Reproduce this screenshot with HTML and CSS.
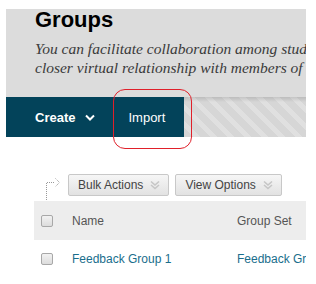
FILE: index.html
```html
<!DOCTYPE html>
<html lang="en">
<head>
    <meta charset="UTF-8">
    <title>Groups</title>
    <link rel="stylesheet" href="styles.css">
</head>
<body>
    <div class="page">
        <div class="page-header">
            <h1>Groups</h1>
            <p class="intro">You can facilitate collaboration among students by creating groups that give them a<br>closer virtual relationship with members of their group.</p>
        </div>

        <div class="action-bar">
            <ul class="actions">
                <li class="action">Create
                    <svg class="chevron" width="10" height="7" viewBox="0 0 10 7"><path d="M1 1.5 L5 5.5 L9 1.5" fill="none" stroke="#fff" stroke-width="2"/></svg>
                </li>
                <li class="action action-import">Import</li>
            </ul>
            <div class="stripes"></div>
        </div>

        <div class="list-area">
            <div class="toolbar">
                <svg class="connector" width="16" height="22" viewBox="0 0 16 22">
                    <path d="M1.5 22 V4.5 H10" fill="none" stroke="#999" stroke-dasharray="1 1"/>
                    <path d="M10.5 0.5 L14.5 4.5 L10.5 8.5" fill="none" stroke="#999" stroke-dasharray="1 1"/>
                </svg>
                <button class="tool-btn">Bulk Actions <span class="dbl"><svg width="10" height="10" viewBox="0 0 10 10"><path d="M1 1.5 L5 5 L9 1.5 M1 5 L5 8.5 L9 5" fill="none" stroke="#c6c6c6" stroke-width="1.6"/></svg></span></button>
                <button class="tool-btn">View Options <span class="dbl"><svg width="10" height="10" viewBox="0 0 10 10"><path d="M1 1.5 L5 5 L9 1.5 M1 5 L5 8.5 L9 5" fill="none" stroke="#c6c6c6" stroke-width="1.6"/></svg></span></button>
            </div>

            <table class="groups">
                <thead>
                    <tr>
                        <th class="col-check"><span class="checkbox"></span></th>
                        <th class="col-name">Name</th>
                        <th class="col-set">Group Set</th>
                    </tr>
                </thead>
                <tbody>
                    <tr>
                        <td class="col-check"><span class="checkbox"></span></td>
                        <td class="col-name"><a href="#">Feedback Group 1</a></td>
                        <td class="col-set"><a href="#">Feedback Group Set</a></td>
                    </tr>
                </tbody>
            </table>
        </div>
    </div>
    <div class="highlight"></div>
</body>
</html>
```

FILE: styles.css
```css
* {
    margin: 0;
    padding: 0;
    box-sizing: border-box;
}

body {
    font-family: "Liberation Sans", Arial, sans-serif;
    background: #fff;
    padding: 9px 10px 0 6px;
    overflow: hidden;
    position: relative;
}

.page {
    width: 300px;
    overflow: hidden;
}

.page-header {
    background: #dcdcdc;
    padding-left: 29px;
    height: 88px;
}

h1 {
    font-size: 22px;
    font-weight: bold;
    color: #000;
    line-height: 22px;
    white-space: nowrap;
}

.intro {
    font-family: "Liberation Serif", "Times New Roman", serif;
    font-style: italic;
    font-size: 15.5px;
    line-height: 19px;
    color: #3a3a3a;
    margin-top: 8px;
    white-space: nowrap;
}

.action-bar {
    display: flex;
    height: 40px;
}

.actions {
    list-style: none;
    display: flex;
    background: #03435a;
    width: 178px;
    padding-left: 29px;
}

.action {
    color: #fff;
    font-size: 13px;
    font-weight: bold;
    display: flex;
    align-items: center;
    gap: 10px;
}

.action-import {
    font-weight: normal;
    margin-left: 33px;
}

.chevron {
    margin-top: 1px;
}

.stripes {
    flex: 1;
    background:
        linear-gradient(to bottom, rgba(0,0,0,0.12), rgba(0,0,0,0) 5px),
        repeating-linear-gradient(45deg, #d6d6d6 0 7px, #e0e0e0 7px 12px);
}

.list-area {
    padding-top: 37px;
    padding-left: 28px;
}

.toolbar {
    display: flex;
    align-items: flex-start;
    gap: 6px;
    height: 27px;
}

.connector {
    margin-left: 11px;
    margin-top: 4px;
    margin-right: 1px;
}

.tool-btn {
    font-family: "Liberation Sans", Arial, sans-serif;
    font-size: 12px;
    color: #444;
    height: 22px;
    padding: 0 8px 0 9px;
    border: 1px solid #c8c8c8;
    border-radius: 2px;
    background: linear-gradient(to bottom, #f6f6f6, #e2e2e2);
    display: flex;
    align-items: center;
    gap: 7px;
}

.dbl svg {
    display: block;
}

.groups {
    border-collapse: collapse;
    width: 290px;
    table-layout: fixed;
}

.groups th,
.groups td {
    text-align: left;
    font-size: 12px;
    font-weight: normal;
    white-space: nowrap;
    overflow: hidden;
}

.groups thead tr {
    background: #ededed;
    height: 39px;
}

.groups th {
    color: #555;
}

.groups tbody tr {
    height: 38px;
}

.col-check {
    width: 38px;
    padding-left: 7px;
}

.col-name {
    width: 165px;
}

.groups a {
    color: #1a6e8c;
    text-decoration: none;
}

.checkbox {
    display: block;
    width: 12px;
    height: 12px;
    border: 1px solid #a8a8a8;
    border-radius: 2px;
    background: linear-gradient(to bottom, #f2f2f2, #dcdcdc);
}

.highlight {
    position: absolute;
    left: 113px;
    top: 89px;
    width: 79px;
    height: 60px;
    border: 1px solid #e0202a;
    border-radius: 12px;
}
```
